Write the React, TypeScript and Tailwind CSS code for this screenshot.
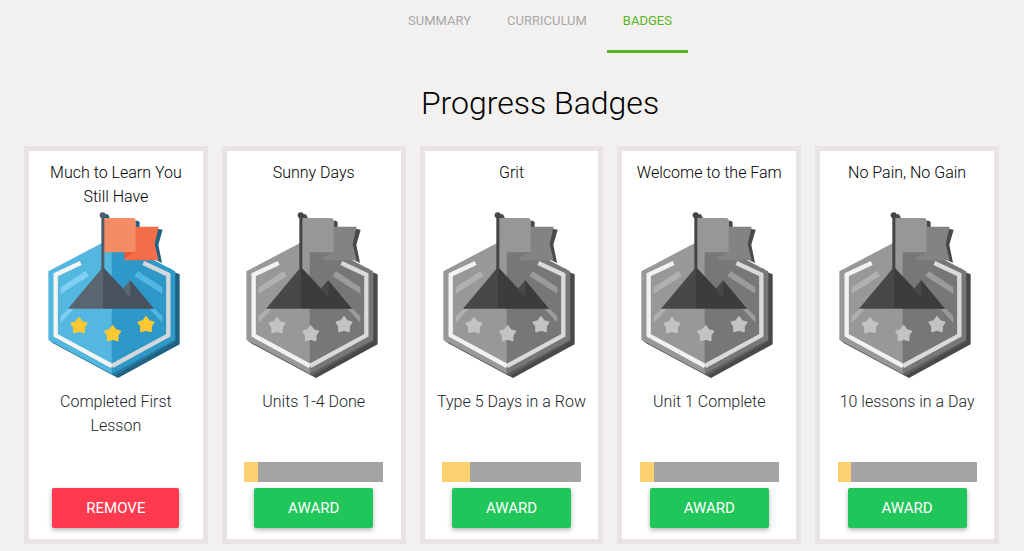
import { useState } from "react";
import { clsx } from "clsx";

interface Badge {
  id: number;
  title: string;
  description: string;
  progress: number;
  awarded: boolean;
}

const TABS = ["Summary", "Curriculum", "Badges"];

const BADGES: Badge[] = [
  { id: 1, title: "Much to Learn You Still Have", description: "Completed First Lesson", progress: 100, awarded: true },
  { id: 2, title: "Sunny Days", description: "Units 1-4 Done", progress: 10, awarded: false },
  { id: 3, title: "Grit", description: "Type 5 Days in a Row", progress: 20, awarded: false },
  { id: 4, title: "Welcome to the Fam", description: "Unit 1 Complete", progress: 10, awarded: false },
  { id: 5, title: "No Pain, No Gain", description: "10 lessons in a Day", progress: 10, awarded: false },
];

const COLOR = {
  shadow: "#1f6282",
  shadowMid: "#267ba3",
  left: "#54b7e0",
  right: "#2e99c9",
  frameLeft: "#f5f5f3",
  frameRight: "#d5d7da",
  shineLeft: "#7fd0f2",
  shineRight: "#54b7e3",
  rockLeft: "#596672",
  rockRight: "#47525d",
  pole: "#4f5d6b",
  flag: "#f48d63",
  flagBack: "#f26d48",
  flagFold: "#ef5232",
  star: "#ffc933",
};

const GRAY: typeof COLOR = {
  shadow: "#494949",
  shadowMid: "#5e5e5e",
  left: "#989898",
  right: "#777777",
  frameLeft: "#f2f2f2",
  frameRight: "#dadada",
  shineLeft: "#b0b0b0",
  shineRight: "#9b9b9b",
  rockLeft: "#484848",
  rockRight: "#3c3c3c",
  pole: "#444444",
  flag: "#979797",
  flagBack: "#838383",
  flagFold: "#777777",
  star: "#c3c3c3",
};

const STAR = "M0 -22 L9 -10 L23 -6 L15 6 L15 21 L0 17 L-15 21 L-15 6 L-23 -6 L-9 -10 Z";

function BadgeArt({ awarded }: { awarded: boolean }) {
  const c = awarded ? COLOR : GRAY;
  return (
    <svg viewBox="3 12 450 531" className="block h-[177px] w-[150px] shrink-0" aria-hidden="true">
      {/* drop shadow and hexagon */}
      <path d="M400 200 L419 208 V418 L234 519 L34 412 L210 440 Z" fill={c.shadow} />
      <path d="M390 190 L407 205 V408 L224 512 L28 407 Z" fill={c.shadowMid} />
      <path d="M216 98 L25 199 V404 L216 507 Z" fill={c.left} />
      <path d="M215 98 L405 199 V404 L215 507 Z" fill={c.right} />

      {/* frame */}
      <path d="M122 174 L47 209 V391 L216 483" fill="none" stroke={c.frameLeft} strokeWidth="13" />
      <path d="M310 174 L385 209 V391 L216 483" fill="none" stroke={c.frameRight} strokeWidth="13" />

      {/* light streaks */}
      <path d="M136 199 L147 213 L62 266 V247 Z M85 312 H101 L62 353 V334 Z" fill={c.shineLeft} />
      <path d="M294 199 L283 213 L367 266 V247 Z M345 312 H329 L367 353 V334 Z" fill={c.shineRight} />

      {/* mountains */}
      <path d="M189 186 L84 311 H189 Z" fill={c.rockLeft} />
      <path d="M189 186 L250 251 L271 226 L342 311 H189 Z" fill={c.rockRight} />
      <path d="M271 226 L248 252 L271 280 Z" fill={c.rockLeft} />

      {/* flag */}
      <path d="M190 28 H204 L210 40 H190 Z M286 47 H294 L299 52 V66 H286 Z M352 71 L368 74 L355 119 L366 174 L348 165 L342 117 Z" fill={c.shadow} />
      <path d="M254 65 H356 L344 117 L356 166 H254 Z" fill={c.flagBack} />
      <path d="M254 141 H286 L254 158 Z" fill={c.flagFold} />
      <path d="M192 39 H282 L287 44 V142 H192 Z" fill={c.flag} />
      <path d="M184 32 H193 V194 L184 202 Z" fill={c.pole} />
      <circle cx="188" cy="31" r="9" fill={c.pole} />

      {/* stars */}
      <g fill={c.star} stroke={c.star} strokeWidth="5" strokeLinejoin="round">
        <path d={STAR} transform="translate(117 361)" />
        <path d={STAR} transform="translate(218 385)" />
        <path d={STAR} transform="translate(318 358)" />
      </g>
    </svg>
  );
}

function BadgeCard({ badge, onToggle }: { badge: Badge; onToggle: () => void }) {
  return (
    <li className="flex flex-col items-center border-[5px] border-[#e7e4e3] bg-white pt-2.5 pb-[11px] text-center">
      <h2 className="min-h-12 px-2.5 leading-6 text-black">{badge.title}</h2>
      <BadgeArt awarded={badge.awarded} />
      <p className="mt-1 mb-6 min-h-12 px-1 leading-6">{badge.description}</p>
      <div className="mb-1.5 h-5 w-4/5">
        {!badge.awarded && (
          <div
            role="progressbar"
            aria-label={badge.title}
            aria-valuenow={badge.progress}
            className="h-full bg-[#a5a3a4]"
          >
            <div className="h-full bg-[#ffd070]" style={{ width: `${badge.progress}%` }} />
          </div>
        )}
      </div>
      <button
        type="button"
        onClick={onToggle}
        className={clsx(
          "h-10 rounded-xs px-[34px] text-[15px] font-normal text-white uppercase shadow-[0_2px_5px_rgba(0,0,0,0.3)]",
          badge.awarded ? "bg-[#ff3a4e]" : "bg-[#20c659]"
        )}
      >
        {badge.awarded ? "Remove" : "Award"}
      </button>
    </li>
  );
}

export default function App() {
  const [activeTab, setActiveTab] = useState("Badges");
  const [badges, setBadges] = useState(BADGES);

  const toggleBadge = (id: number) => {
    setBadges(badges.map((b) => (b.id === id ? { ...b, awarded: !b.awarded } : b)));
  };

  return (
    <div className="min-h-screen bg-[#f3f1f0] pb-[7px] font-['Roboto',sans-serif] text-base font-light text-[#212529]">
      {/* Tabs */}
      <nav className="flex justify-center gap-1 pl-14">
        {TABS.map((tab) => (
          <button
            key={tab}
            type="button"
            onClick={() => setActiveTab(tab)}
            className={clsx(
              "h-[53px] border-b-[3px] px-4 pb-2 text-[13px] font-normal uppercase",
              tab === activeTab ? "border-[#56b526] text-[#56b526]" : "border-transparent text-[#a9a7a7]"
            )}
          >
            {tab}
          </button>
        ))}
      </nav>

      <h1 className="mt-[30px] mb-[23px] pl-14 text-center text-[32px] leading-10 text-black">Progress Badges</h1>

      {/* Badges */}
      <ul className="grid grid-cols-5 gap-3.5 pr-[25px] pl-6">
        {badges.map((badge) => (
          <BadgeCard key={badge.id} badge={badge} onToggle={() => toggleBadge(badge.id)} />
        ))}
      </ul>
    </div>
  );
}
